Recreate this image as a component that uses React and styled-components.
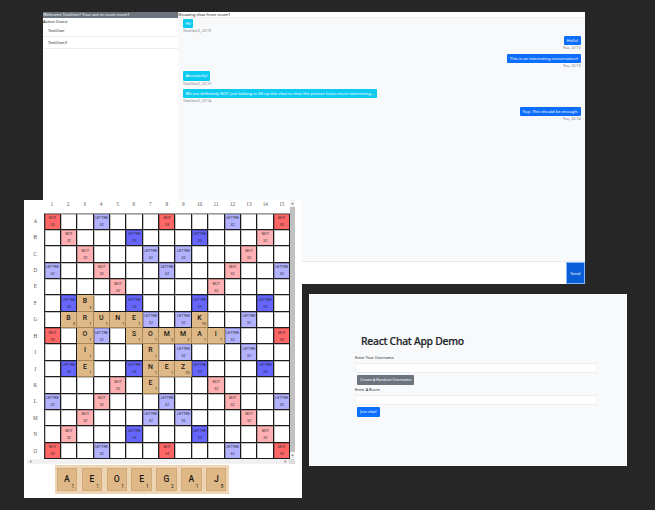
import React from "react";
import styled, { createGlobalStyle } from "styled-components";

const Global = createGlobalStyle`
  * { box-sizing: border-box; }
  body { margin: 0; background: #262626; overflow: hidden; }
`;

const Desktop = styled.main`
  position: relative;
  width: 655px;
  height: 510px;
  background: #262626;
  font-family: "Noto Sans", "Open Sans", sans-serif;
  color: #212529;
  white-space: nowrap;
  overflow: hidden;
`;

const Window = styled.section`
  position: absolute;
  left: ${(p) => p.$x}px;
  top: ${(p) => p.$y}px;
  width: ${(p) => p.$w}px;
  height: ${(p) => p.$h}px;
  background: ${(p) => p.$bg};
  overflow: hidden;
`;

/* ---------- chat room ---------- */

const ChatLayout = styled.div`
  display: grid;
  grid-template-columns: 135px 1fr;
  height: 100%;
`;

const Sidebar = styled.aside`
  background: #fff;
`;

const Welcome = styled.div`
  height: 5.6px;
  background: #6c757d;
  color: #f8f9fa;
  font-size: 4.25px;
  line-height: 5.2px;
`;

const SidebarLabel = styled.div`
  height: 7.2px;
  font-size: 4.2px;
  line-height: 7.4px;
`;

const UserRow = styled.div`
  height: 12px;
  padding-left: 5px;
  border-bottom: 1px solid #eceeef;
  font-size: 4.1px;
  line-height: 12px;
`;

const ChatPane = styled.div`
  display: flex;
  flex-direction: column;
  background: #f8f9fb;
`;

const ChatHeader = styled.div`
  height: 5.5px;
  background: #fff;
  border-bottom: 1px solid #eceef0;
  font-size: 4.3px;
  line-height: 5px;
`;

const Messages = styled.div`
  flex: 1;
  display: flex;
  flex-direction: column;
  padding: 1.1px 4.5px 0 5px;
`;

const Message = styled.div`
  display: flex;
  flex-direction: column;
  align-items: ${(p) => (p.$own ? "flex-end" : "flex-start")};
  height: 17.6px;
`;

const Bubble = styled.div`
  height: 9.2px;
  padding: 0 2.4px;
  border-radius: 1px;
  background: ${(p) => (p.$own ? "#0d6efd" : "#0dcaf0")};
  color: #fff;
  font-size: ${(p) => (p.$own ? 4.2 : 4.28)}px;
  line-height: 9.2px;
`;

const Meta = styled.div`
  color: #6c757d;
  font-size: 3.65px;
  line-height: 6.8px;
`;

const Composer = styled.div`
  display: flex;
  justify-content: flex-end;
  height: 23px;
  background: #fff;
  border-top: 1px solid #e9ecef;
`;

const SendButton = styled.button`
  width: 19px;
  padding: 0;
  border: 1px solid #85b7fe;
  background: #0b5ed7;
  color: #fff;
  font: 4.2px "Noto Sans", sans-serif;
`;

const messages = [
  ["Hi!", "TestUser2, 22:13"],
  ["Hello!", "You, 22:13", true],
  ["This is an interesting conversation!", "You, 22:13", true],
  ["Absolutely!", "TestUser2, 22:13"],
  ["We are definitely NOT just talking to fill up the chat so that the picture looks more interesting...", "TestUser2, 22:14"],
  ["Yup. This should be enough.", "You, 22:14", true],
];

function ChatRoom() {
  return (
    <Window $x={43} $y={12} $w={542} $h={272} $bg="#f8f9fb">
      <ChatLayout>
        <Sidebar>
          <Welcome>Welcome TestUser! Your are in room room1</Welcome>
          <SidebarLabel>Active Users:</SidebarLabel>
          <UserRow>TestUser</UserRow>
          <UserRow>TestUser2</UserRow>
        </Sidebar>
        <ChatPane>
          <ChatHeader>Showing chat from room1</ChatHeader>
          <Messages>
            {messages.map(([text, meta, own]) => (
              <Message key={text} $own={own}>
                <Bubble $own={own}>{text}</Bubble>
                <Meta>{meta}</Meta>
              </Message>
            ))}
          </Messages>
          <Composer>
            <SendButton>Send</SendButton>
          </Composer>
        </ChatPane>
      </ChatLayout>
    </Window>
  );
}

/* ---------- join form ---------- */

const JoinForm = styled.div`
  display: flex;
  flex-direction: column;
  align-items: flex-start;
  padding: 39px 30px 0 46px;
`;

const Title = styled.h1`
  margin: 0 0 0 6px;
  height: 19.9px;
  font: 500 10.4px/16px "Noto Sans", "Open Sans", sans-serif;
  letter-spacing: -0.28px;
  -webkit-text-stroke: 0.2px #212529;
`;

const FieldLabel = styled.label`
  height: 10px;
  font-size: 3.85px;
  line-height: 10.8px;
`;

const Field = styled.div`
  width: 242px;
  height: 9.7px;
  background: #fff;
  border: 1px solid #eceff1;
  border-radius: 1px;
`;

const FormButton = styled.button`
  height: 9.8px;
  margin: 2.3px 0 0.4px 2px;
  padding: 0 3px;
  border: 0;
  border-radius: 1px;
  background: ${(p) => p.$bg};
  color: #fff;
  font: 3.87px/9.8px "Noto Sans", sans-serif;
`;

function JoinPage() {
  return (
    <Window $x={309} $y={294} $w={318} $h={172} $bg="#f8f9fb">
      <JoinForm>
        <Title>React Chat App Demo</Title>
        <FieldLabel>Enter Your Username</FieldLabel>
        <Field />
        <FormButton $bg="#6c757d">Create A Random Username</FormButton>
        <FieldLabel>Enter A Room</FieldLabel>
        <Field />
        <FormButton $bg="#0d6efd">Join chat!</FormButton>
      </JoinForm>
    </Window>
  );
}

/* ---------- word board ---------- */

const layout = [
  "T..d...T...d..T",
  ".D...t...t...D.",
  "..D...d.d...D..",
  "d..D...d...D..d",
  "....D.....D....",
  ".t...t...t...t.",
  "..d...d.d...d..",
  "T..d.......d..T",
];
const rows = [...layout, ...layout.slice(0, 7).reverse()];

const bonuses = {
  T: ["MOT", "X3", "#ff6666"],
  D: ["MOT", "X2", "#ffb0b2"],
  t: ["LETTRE", "X3", "#6666ff"],
  d: ["LETTRE", "X2", "#b2b2ff"],
};

const placed = {
  F3: "B", G2: "B", G3: "R", G4: "U", G5: "N", G6: "E", G10: "K",
  H3: "O", H6: "S", H7: "O", H8: "M", H9: "M", H10: "A", H11: "I",
  I3: "I", I7: "R", J3: "E", J7: "N", J8: "E", J9: "Z", K7: "E",
};
const points = { B: 3, M: 2, G: 2, K: 10, Z: 10, J: 8 };

const BoardLayout = styled.div`
  display: grid;
  grid-template-columns: 16.5px 246.5px 4.7px;
  grid-template-rows: 12.5px 246.5px 5px;
  padding-left: 3px;
`;

const ColumnLabels = styled.div`
  grid-column: 2;
  display: grid;
  grid-template-columns: repeat(15, 1fr);
  font: 5.2px/8px "Liberation Serif", serif;
  color: #555;
  text-align: center;
`;

const RowLabels = styled.div`
  grid-column: 1;
  grid-row: 2;
  display: grid;
  grid-template-rows: repeat(15, 1fr);
  align-items: center;
  text-align: center;
  font: 5.2px "Liberation Serif", serif;
  color: #555;
`;

const Grid = styled.div`
  grid-column: 2;
  grid-row: 2;
  display: grid;
  grid-template: repeat(15, minmax(0, 1fr)) / repeat(15, minmax(0, 1fr));
  border-top: 1px solid #999;
  border-left: 1px solid #333;
`;

const Square = styled.div`
  display: flex;
  flex-direction: column;
  align-items: center;
  background: ${(p) => p.$bg};
  border: solid #1c1c1c;
  border-width: 0 1px 1px 0;
  box-shadow: inset 1px 1px 0 rgba(0, 0, 0, 0.24);
  color: #24242c;
  font: 3.35px/7px "Liberation Sans", sans-serif;
  padding: 1.6px 0 0 0.8px;
`;

const Tile = styled.div`
  position: relative;
  display: flex;
  justify-content: center;
  background: #deb887;
  border: 1px solid #d1aa77;
  border-width: ${(p) => (p.$rack ? "1px" : "0 1px 1px 0")};
  border-color: ${(p) => (p.$rack ? "#d1aa77" : "#a98756")};
  color: #1b1815;
  font: ${(p) => (p.$rack ? "500 8.6px/20.5px" : "500 6.9px/12.8px")} Roboto, sans-serif;
`;

const Points = styled.span`
  position: absolute;
  right: ${(p) => (p.$rack ? 2 : 1.2)}px;
  bottom: ${(p) => (p.$rack ? 1 : 1.2)}px;
  font: ${(p) => (p.$rack ? "4.8px/5px" : "4px/4px")} Roboto, sans-serif;
`;

const VerticalScroll = styled.div`
  grid-column: 3;
  grid-row: 1 / 3;
  display: flex;
  flex-direction: column;
  justify-content: space-between;
  align-items: center;
  background: #f1f1f1;
`;

const Thumb = styled.div`
  align-self: stretch;
  height: 245px;
  background: #c1c1c1;
`;

const HorizontalScroll = styled.div`
  grid-column: 1 / 4;
  display: flex;
  justify-content: space-between;
  align-items: center;
  padding: 0 1.5px;
  background: linear-gradient(to right, #f1f1f1 262.5px, #dcdcdc 262.5px);
`;

const Arrow = styled.svg`
  width: 3px;
  height: 3px;
  margin: 2px ${(p) => (p.$end ? "6px" : 0)} 2px 0;
  fill: #777;
`;

const Rack = styled.div`
  display: grid;
  grid-template-columns: repeat(7, 20.3px);
  gap: 4.6px;
  width: 174px;
  height: 29px;
  margin: 0.8px 0 0 30.7px;
  padding: 3.7px 2.1px;
  background: #ecd4b5;
`;

function LetterTile({ letter, rack }) {
  return (
    <Tile $rack={rack}>
      {letter}
      <Points $rack={rack}>{points[letter] || 1}</Points>
    </Tile>
  );
}

function BoardSquare({ id, kind }) {
  if (placed[id]) return <LetterTile letter={placed[id]} />;
  const [name, factor, color] = bonuses[kind] || ["", "", "#fff"];
  return (
    <Square $bg={color}>
      <span>{name}</span>
      <span>{factor}</span>
    </Square>
  );
}

function WordBoard() {
  const letters = "ABCDEFGHIJKLMNO".split("");
  return (
    <Window $x={24} $y={200} $w={278} $h={298} $bg="#fff">
      <BoardLayout>
        <ColumnLabels>
          {letters.map((l, i) => <span key={l}>{i + 1}</span>)}
        </ColumnLabels>
        <RowLabels>
          {letters.map((l) => <span key={l}>{l}</span>)}
        </RowLabels>
        <Grid>
          {rows.flatMap((row, y) =>
            row.split("").map((kind, x) => {
              const id = letters[y] + (x + 1);
              return <BoardSquare key={id} id={id} kind={kind} />;
            })
          )}
        </Grid>
        <VerticalScroll>
          <Arrow viewBox="0 0 4 4"><path d="M0 3 2 1l2 2z" /></Arrow>
          <Thumb />
          <Arrow viewBox="0 0 4 4"><path d="M0 1 2 3l2-2z" /></Arrow>
        </VerticalScroll>
        <HorizontalScroll>
          <Arrow viewBox="0 0 4 4"><path d="M3 0 1 2l2 2z" /></Arrow>
          <Arrow $end viewBox="0 0 4 4"><path d="M1 0l2 2-2 2z" /></Arrow>
        </HorizontalScroll>
      </BoardLayout>
      <Rack>
        {"AEOEGAJ".split("").map((l, i) => <LetterTile key={i} letter={l} rack />)}
      </Rack>
    </Window>
  );
}

export default function App() {
  return (
    <>
      <Global />
      <Desktop>
        <ChatRoom />
        <WordBoard />
        <JoinPage />
      </Desktop>
    </>
  );
}
